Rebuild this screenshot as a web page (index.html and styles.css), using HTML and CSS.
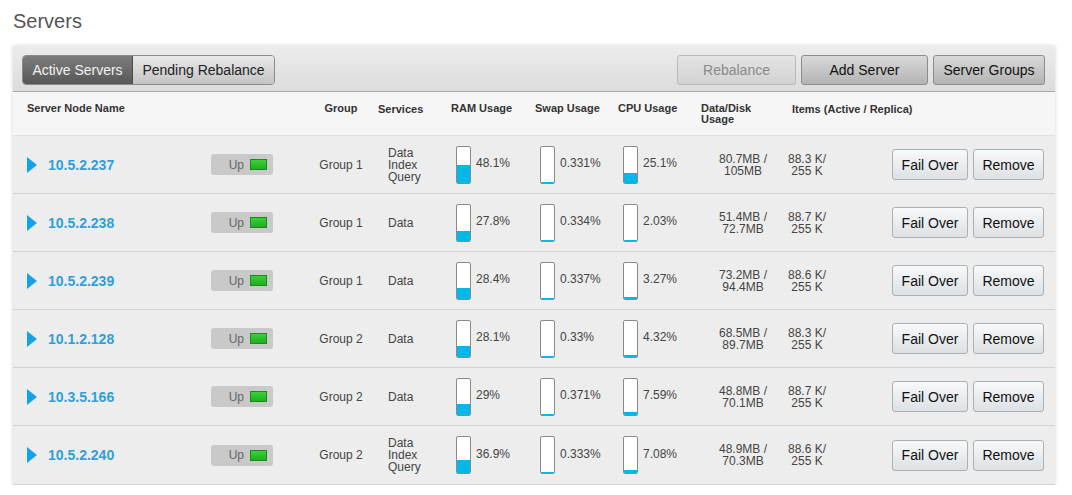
FILE: index.html
```html
<!DOCTYPE html>
<html>
<head>
<meta charset="utf-8">
<link rel="stylesheet" href="styles.css">
</head>
<body>
<h1 class="title">Servers</h1>
<div class="panel">
  <div class="toolbar">
    <div class="tabs">
      <span class="tab active">Active Servers</span>
      <span class="tab">Pending Rebalance</span>
    </div>
    <div class="actions">
      <span class="tbtn disabled w-reb">Rebalance</span>
      <span class="tbtn w-add">Add Server</span>
      <span class="tbtn w-grp">Server Groups</span>
    </div>
  </div>
  <div class="row head">
    <div class="c-name">Server Node Name</div>
    <div class="c-status"></div>
    <div class="c-group">Group</div>
    <div class="c-svc">Services</div>
    <div class="c-ram">RAM Usage</div>
    <div class="c-swap">Swap Usage</div>
    <div class="c-cpu">CPU Usage</div>
    <div class="c-data">Data/Disk<br>Usage</div>
    <div class="c-items">Items (Active / Replica)</div>
    <div class="c-act"></div>
  </div>

  <div class="row">
    <div class="c-name"><span class="arrow"></span><span class="ip">10.5.2.237</span></div>
    <div class="c-status"><span class="badge">Up <i class="led"></i></span></div>
    <div class="c-group">Group 1</div>
    <div class="c-svc">Data<br>Index<br>Query</div>
    <div class="c-ram"><span class="bar"><i style="height:48.1%"></i></span><span class="pct">48.1%</span></div>
    <div class="c-swap"><span class="bar"><i style="height:0.331%"></i></span><span class="pct">0.331%</span></div>
    <div class="c-cpu"><span class="bar"><i style="height:25.1%"></i></span><span class="pct">25.1%</span></div>
    <div class="c-data">80.7MB /<br>105MB</div>
    <div class="c-items"><span>88.3 K/<br>255 K</span></div>
    <div class="c-act"><span class="btn">Fail Over</span><span class="btn">Remove</span></div>
  </div>

  <div class="row">
    <div class="c-name"><span class="arrow"></span><span class="ip">10.5.2.238</span></div>
    <div class="c-status"><span class="badge">Up <i class="led"></i></span></div>
    <div class="c-group">Group 1</div>
    <div class="c-svc">Data</div>
    <div class="c-ram"><span class="bar"><i style="height:27.8%"></i></span><span class="pct">27.8%</span></div>
    <div class="c-swap"><span class="bar"><i style="height:0.334%"></i></span><span class="pct">0.334%</span></div>
    <div class="c-cpu"><span class="bar"><i style="height:2.03%"></i></span><span class="pct">2.03%</span></div>
    <div class="c-data">51.4MB /<br>72.7MB</div>
    <div class="c-items"><span>88.7 K/<br>255 K</span></div>
    <div class="c-act"><span class="btn">Fail Over</span><span class="btn">Remove</span></div>
  </div>

  <div class="row">
    <div class="c-name"><span class="arrow"></span><span class="ip">10.5.2.239</span></div>
    <div class="c-status"><span class="badge">Up <i class="led"></i></span></div>
    <div class="c-group">Group 1</div>
    <div class="c-svc">Data</div>
    <div class="c-ram"><span class="bar"><i style="height:28.4%"></i></span><span class="pct">28.4%</span></div>
    <div class="c-swap"><span class="bar"><i style="height:0.337%"></i></span><span class="pct">0.337%</span></div>
    <div class="c-cpu"><span class="bar"><i style="height:3.27%"></i></span><span class="pct">3.27%</span></div>
    <div class="c-data">73.2MB /<br>94.4MB</div>
    <div class="c-items"><span>88.6 K/<br>255 K</span></div>
    <div class="c-act"><span class="btn">Fail Over</span><span class="btn">Remove</span></div>
  </div>

  <div class="row">
    <div class="c-name"><span class="arrow"></span><span class="ip">10.1.2.128</span></div>
    <div class="c-status"><span class="badge">Up <i class="led"></i></span></div>
    <div class="c-group">Group 2</div>
    <div class="c-svc">Data</div>
    <div class="c-ram"><span class="bar"><i style="height:28.1%"></i></span><span class="pct">28.1%</span></div>
    <div class="c-swap"><span class="bar"><i style="height:0.33%"></i></span><span class="pct">0.33%</span></div>
    <div class="c-cpu"><span class="bar"><i style="height:4.32%"></i></span><span class="pct">4.32%</span></div>
    <div class="c-data">68.5MB /<br>89.7MB</div>
    <div class="c-items"><span>88.3 K/<br>255 K</span></div>
    <div class="c-act"><span class="btn">Fail Over</span><span class="btn">Remove</span></div>
  </div>

  <div class="row">
    <div class="c-name"><span class="arrow"></span><span class="ip">10.3.5.166</span></div>
    <div class="c-status"><span class="badge">Up <i class="led"></i></span></div>
    <div class="c-group">Group 2</div>
    <div class="c-svc">Data</div>
    <div class="c-ram"><span class="bar"><i style="height:29%"></i></span><span class="pct">29%</span></div>
    <div class="c-swap"><span class="bar"><i style="height:0.371%"></i></span><span class="pct">0.371%</span></div>
    <div class="c-cpu"><span class="bar"><i style="height:7.59%"></i></span><span class="pct">7.59%</span></div>
    <div class="c-data">48.8MB /<br>70.1MB</div>
    <div class="c-items"><span>88.7 K/<br>255 K</span></div>
    <div class="c-act"><span class="btn">Fail Over</span><span class="btn">Remove</span></div>
  </div>

  <div class="row last">
    <div class="c-name"><span class="arrow"></span><span class="ip">10.5.2.240</span></div>
    <div class="c-status"><span class="badge">Up <i class="led"></i></span></div>
    <div class="c-group">Group 2</div>
    <div class="c-svc">Data<br>Index<br>Query</div>
    <div class="c-ram"><span class="bar"><i style="height:36.9%"></i></span><span class="pct">36.9%</span></div>
    <div class="c-swap"><span class="bar"><i style="height:0.333%"></i></span><span class="pct">0.333%</span></div>
    <div class="c-cpu"><span class="bar"><i style="height:7.08%"></i></span><span class="pct">7.08%</span></div>
    <div class="c-data">48.9MB /<br>70.3MB</div>
    <div class="c-items"><span>88.6 K/<br>255 K</span></div>
    <div class="c-act"><span class="btn">Fail Over</span><span class="btn">Remove</span></div>
  </div>
</div>
</body>
</html>
```
FILE: styles.css
```css
* { box-sizing: border-box; }
body {
  margin: 0;
  padding: 0 17px 0 13px;
  background: #fff;
  font-family: "Liberation Sans", Arial, sans-serif;
  color: #444;
}
.title {
  margin: 0;
  padding-top: 9px;
  height: 46px;
  font-size: 20px;
  font-weight: normal;
  color: #555;
  line-height: 24px;
}
.panel {
  width: 1042px;
  background: #ededed;
  box-shadow: 0 0 4px rgba(0,0,0,0.18);
  border-bottom: 1px solid #cdd6dc;
}
.toolbar {
  height: 46px;
  display: flex;
  justify-content: space-between;
  align-items: flex-start;
  padding: 9px 10px 0 9px;
  background: linear-gradient(#ececec, #dcdcdc);
  border-bottom: 1px solid #a9a9a9;
}
.tabs {
  display: flex;
  height: 30px;
  border: 1px solid #8a8a8a;
  border-radius: 4px;
  overflow: hidden;
}
.tab {
  display: flex;
  align-items: center;
  justify-content: center;
  white-space: nowrap;
  font-size: 14px;
  color: #222;
  background: linear-gradient(#e9e9e9, #c4c4c4);
  width: 141px;
}
.tab.active {
  width: 110px;
  color: #f2f2f2;
  background: linear-gradient(#7d7d7d, #575757);
  border-right: 1px solid #4a4a4a;
}
.actions { display: flex; gap: 5px; }
.tbtn {
  height: 30px;
  display: flex;
  align-items: center;
  justify-content: center;
  white-space: nowrap;
  font-size: 14px;
  color: #111;
  background: linear-gradient(#d9d9d9, #b3b3b3);
  border: 1px solid #8c8c8c;
  border-radius: 3px;
}
.tbtn.disabled {
  color: #8a8a8a;
  background: linear-gradient(#e4e4e4, #d2d2d2);
  border-color: #b9b9b9;
}
.w-reb { width: 119px; }
.w-add { width: 127px; }
.w-grp { width: 112px; }

.row {
  display: grid;
  grid-template-columns: 187px 105px 72px 68px 85px 83px 82px 85px 100px 175px;
  height: 58px;
  border-bottom: 1px solid #d3d3d3;
  font-size: 12px;
  color: #444;
}
.row.last { border-bottom: none; }
.row > div { display: flex; align-items: center; white-space: nowrap; }
.row.head {
  height: 44px;
  background: #f6f6f6;
  border-bottom: 1px solid #e2e2e2;
  font-size: 11px;
  font-weight: bold;
  color: #333;
  line-height: 11px;
}
.row.head > div { align-items: flex-start; padding-top: 11px; }

.c-name { padding-left: 14px; }
.c-status { padding-left: 11px; }
.c-group { justify-content: center; }
.c-svc { padding-left: 11px; line-height: 12px; }
.head .c-svc { padding-left: 1px; }
.c-ram { padding-left: 11px; }
.c-swap, .c-cpu { padding-left: 10px; }
.head .c-ram { padding-left: 6px; }
.head .c-swap, .head .c-cpu { padding-left: 5px; }
.c-data { justify-content: center; text-align: center; line-height: 12px; padding-left: 11px; }
.head .c-data { justify-content: flex-start; text-align: left; padding-left: 6px; line-height: 11px; }
.c-items { padding-left: 8px; line-height: 12px; }
.c-items span { width: 38px; text-align: center; }
.head .c-items { padding-left: 12px; overflow: visible; }
.c-act { justify-content: flex-end; gap: 5px; padding-right: 11px; }

.arrow {
  width: 0; height: 0;
  border-top: 8px solid transparent;
  border-bottom: 8px solid transparent;
  border-left: 10px solid #12a2ea;
  margin-right: 11px;
}
.ip { font-size: 14px; font-weight: bold; color: #2f9fd9; }
.badge {
  display: flex;
  align-items: center;
  justify-content: flex-end;
  width: 62px;
  height: 21px;
  padding-right: 6px;
  border-radius: 3px;
  background: #c9c9c9;
  color: #666;
  font-size: 12px;
}
.led {
  display: block;
  width: 17px;
  height: 11px;
  margin-left: 6px;
  background: linear-gradient(#3ad03a, #1eb01e);
  border: 1px solid #1b8a1b;
}
.bar {
  position: relative;
  display: block;
  width: 15px;
  height: 38px;
  border: 1px solid #8a8a8a;
  border-radius: 2px;
  background: #fff;
  overflow: hidden;
  margin-right: 5px;
}
.bar i {
  position: absolute;
  left: 0; right: 0; bottom: 0;
  background: #00b9e8;
  min-height: 1px;
}
.pct { margin-top: -3px; }
.btn {
  display: flex;
  align-items: center;
  justify-content: center;
  height: 31px;
  font-size: 14px;
  color: #111;
  background: linear-gradient(#f7f9fa, #dde1e4);
  border: 1px solid #a9b1b7;
  border-radius: 3px;
}
.btn:first-child { width: 76px; }
.btn:last-child { width: 71px; }
```
